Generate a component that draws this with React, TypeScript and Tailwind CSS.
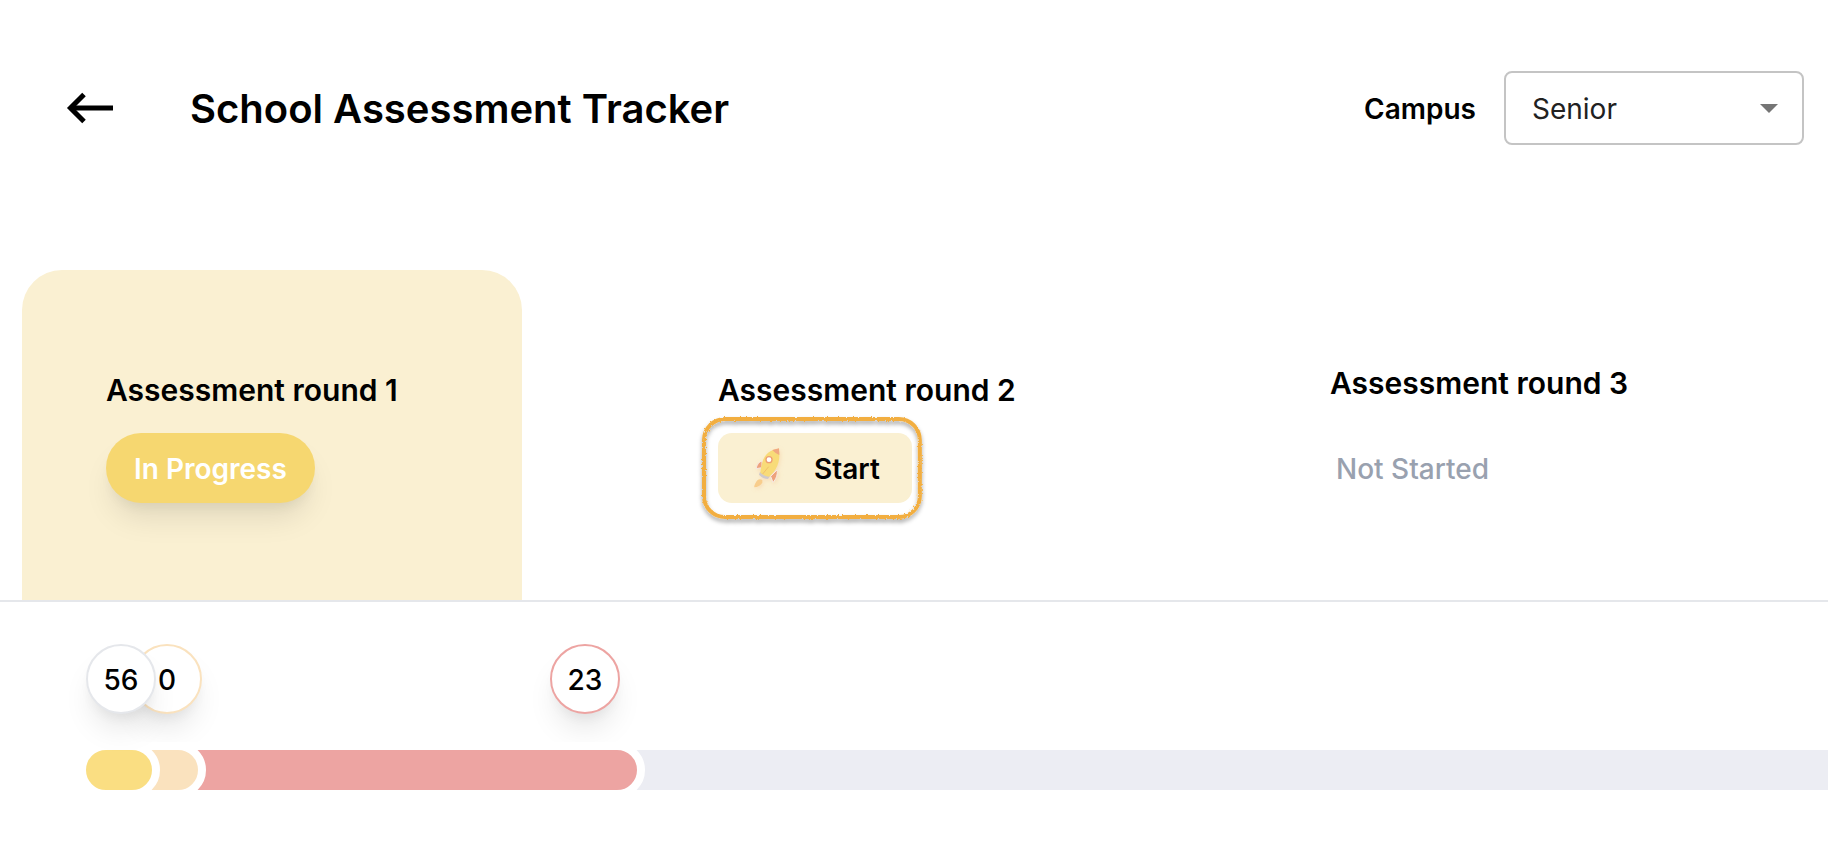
import React, { useState } from 'react';

const ROUND_TITLE = "text-[30px] leading-10 font-semibold whitespace-nowrap";

const BackArrow: React.FC = () => (
  <svg width="48" height="32" viewBox="0 0 48 32" fill="none" stroke="black" strokeWidth="5">
    <path d="M4 16H47" />
    <path d="M18 2.5L4.5 16L18 29.5" />
  </svg>
);

const Rocket: React.FC = () => (
  <svg className="h-[42px] w-[30px] shrink-0 overflow-visible" viewBox="50 50 90 126" aria-hidden="true">
    <defs>
      <filter id="rocket-glow" x="-50%" y="-50%" width="200%" height="200%">
        <feDropShadow dx="3" dy="5" stdDeviation="6" floodColor="#f0a060" floodOpacity="0.25" />
      </filter>
    </defs>
    <g filter="url(#rocket-glow)">
      <path d="M81 149C73 144 66 148 62 156C58 163 56 168 57 171C66 170 77 165 81 157Z" fill="#f8cd8c" />
      <path d="M80 92C71 94 65 103 62 115L80 112Z" fill="#eea27b" stroke="#f6e9e4" strokeWidth="3" />
      <path d="M125 119C128 132 122 147 113 156L106 138Z" fill="#eea27b" stroke="#f6e9e4" strokeWidth="3" />
      <path d="M74 124L104 137L98 146C88 146 78 141 71 133Z" fill="#cfc9cb" />
      <path d="M131 55C105 57 87 72 81 96C78 107 76 117 75 127C83 134 91 138 101 139C121 122 137 98 131 55Z" fill="#f8db78" />
      <path d="M131 54L111 59C117 66 124 71 132 74Z" fill="#f0a880" />
      <path d="M100 109L82 131" stroke="#f0c06b" strokeWidth="3" fill="none" />
      <circle cx="101" cy="88" r="9" fill="white" stroke="#ee9f72" strokeWidth="4" />
    </g>
  </svg>
);

// hand drawn marker around the start button
const Highlight: React.FC = () => (
  <svg className="pointer-events-none absolute -top-4 -left-4 h-[102px] w-[calc(100%+26px)] overflow-visible" aria-hidden="true">
    <defs>
      <filter id="crayon" x="-10%" y="-10%" width="120%" height="130%">
        <feTurbulence type="fractalNoise" baseFrequency="0.45" numOctaves="2" seed="4" result="noise" />
        <feDisplacementMap in="SourceGraphic" in2="noise" scale="3" result="rough" />
        <feDropShadow in="rough" dx="0" dy="3" stdDeviation="2" floodColor="#000000" floodOpacity="0.35" />
      </filter>
    </defs>
    <g filter="url(#crayon)">
      <rect x="2" y="2" width="calc(100% - 4px)" height="98" rx="21" fill="none" stroke="#f2ae3f" strokeWidth="4" />
    </g>
  </svg>
);

interface BubbleProps {
  value: number;
  className: string;
}

const Bubble: React.FC<BubbleProps> = ({ value, className }) => (
  <div
    className={`flex size-[70px] shrink-0 items-center justify-center rounded-full border-2 bg-white pt-0.5 text-[28px] leading-9 font-medium shadow-[0_20px_30px_-6px_rgba(0,0,0,0.1),0_8px_12px_-4px_rgba(0,0,0,0.05)] ${className}`}
  >
    {value}
  </div>
);

const App: React.FC = () => {
  const [campus, setCampus] = useState("Senior");

  return (
    <div className="overflow-x-hidden bg-white font-['Inter','Liberation_Sans',sans-serif] text-black">
      <header className="flex items-center pt-[71px] pr-6 pl-[66px]">
        <button type="button" aria-label="Back">
          <BackArrow />
        </button>
        <h1 className="ml-[76px] pt-0.5 text-[40px] leading-[48px] font-semibold">School Assessment Tracker</h1>
        <label htmlFor="campus" className="ml-auto pt-0.5 text-[28px] leading-9 font-semibold">Campus</label>
        <div className="relative ml-7">
          <select
            id="campus"
            value={campus}
            onChange={(e) => setCampus(e.target.value)}
            className="h-[74px] w-[300px] appearance-none rounded-lg border-2 border-[#c4c4c4] bg-white pt-0.5 pl-[26px] text-[28px] leading-9 text-[#212121]"
          >
            <option>Senior</option>
            <option>Junior</option>
          </select>
          <svg className="pointer-events-none absolute top-[33px] right-[26px]" width="18" height="9" viewBox="0 0 18 9">
            <path d="M0 0H18L9 9Z" fill="#757575" />
          </svg>
        </div>
      </header>

      <section className="mt-[125px] grid grid-cols-3 gap-28 border-b-2 border-gray-200 pr-[82px] pl-[22px]">
        <div className="rounded-t-[40px] bg-[#faf0d2] px-[84px] pt-[100px] pb-[97px]">
          <h2 className={ROUND_TITLE}>Assessment round 1</h2>
          <button
            type="button"
            className="mt-[23px] h-[70px] rounded-full bg-[#f6d770] px-7 pt-0.5 text-[28px] leading-9 font-semibold whitespace-nowrap text-white shadow-[0_20px_30px_-6px_rgba(0,0,0,0.1),0_8px_12px_-4px_rgba(0,0,0,0.05)]"
          >
            In Progress
          </button>
        </div>
        <div className="px-[84px] pt-[100px]">
          <h2 className={ROUND_TITLE}>Assessment round 2</h2>
          <div className="relative mt-[23px] w-fit">
            <button
              type="button"
              className="flex h-[70px] items-center gap-8 rounded-[14px] bg-[#faf0d2] pr-8 pl-[34px] text-[28px] leading-9 font-semibold"
            >
              <Rocket />
              <span className="pt-0.5">Start</span>
            </button>
            <Highlight />
          </div>
        </div>
        <div className="px-[84px] pt-[93px]">
          <h2 className={ROUND_TITLE}>Assessment round 3</h2>
          <p className="mt-[30px] flex h-[70px] items-center pt-0.5 pl-1.5 text-[28px] leading-9 font-medium whitespace-nowrap text-gray-400">
            Not Started
          </p>
        </div>
      </section>

      <section className="pt-[42px] pb-11">
        <div className="flex pl-[86px]">
          <Bubble value={56} className="z-10 border-gray-200" />
          <Bubble value={0} className="-ml-6 border-[#fae2be]" />
          <Bubble value={23} className="ml-[348px] border-[#eda4a2]" />
        </div>
        <div className="mt-7 grid items-center pl-[78px]">
          <div className="col-start-1 row-start-1 ml-2 h-10 bg-[#ecedf3]" />
          <div className="col-start-1 row-start-1 h-14 w-[567px] rounded-full border-8 border-white bg-[#eda4a2]" />
          <div className="col-start-1 row-start-1 h-14 w-32 rounded-full border-8 border-white bg-[#fae2be]" />
          <div className="col-start-1 row-start-1 h-14 w-[82px] rounded-full border-8 border-white bg-[#fade82]" />
        </div>
      </section>
    </div>
  );
};

export default App;
